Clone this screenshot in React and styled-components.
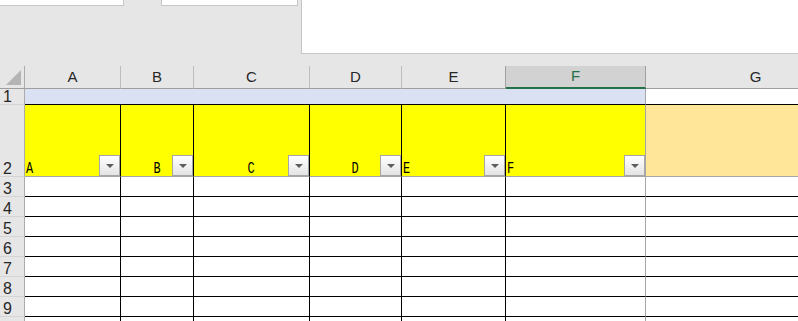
import React from "react";
import styled, { createGlobalStyle } from "styled-components";

const GlobalStyle = createGlobalStyle`
  html, body {
    margin: 0;
    padding: 0;
    background: #ffffff;
    overflow: hidden;
  }
`;

const Page = styled.div`
  width: 798px;
  height: 321px;
  overflow: hidden;
  background: #e6e6e6;
  font-family: "Liberation Sans", Arial, sans-serif;
`;

const TopBar = styled.div`
  display: flex;
  align-items: flex-start;
  height: 66px;
`;

const Field = styled.div`
  box-sizing: border-box;
  width: ${(p) => p.$w || "auto"};
  flex: ${(p) => (p.$grow ? 1 : "none")};
  height: ${(p) => p.$h}px;
  margin-left: ${(p) => p.$ml || 0}px;
  background: #ffffff;
  border: 1px solid #c6c6c6;
  border-top: none;
  border-left: ${(p) => (p.$noLeft ? "none" : "1px solid #c6c6c6")};
  border-right: ${(p) => (p.$grow ? "none" : "1px solid #c6c6c6")};
`;

const Sheet = styled.div`
  display: grid;
  grid-template-columns: 25px 96px 73px 116px 92px 104px 140px 220px;
  grid-template-rows: 23px 16px 72px repeat(8, 20px);
  background: #ffffff;
`;

const Corner = styled.div`
  box-sizing: border-box;
  position: relative;
  background: #e6e6e6;
  border-right: 1px solid #ababab;
  border-bottom: 1px solid #9e9e9e;

  &::after {
    content: "";
    position: absolute;
    left: 6px;
    top: 4px;
    width: 0;
    height: 0;
    border-left: 15px solid transparent;
    border-bottom: 15px solid #b4b4b4;
  }
`;

const ColHead = styled.div`
  box-sizing: border-box;
  display: flex;
  align-items: flex-end;
  justify-content: center;
  padding-bottom: 3px;
  font-size: 15px;
  color: ${(p) => (p.$selected ? "#217346" : "#262626")};
  background: ${(p) => (p.$selected ? "#d2d2d2" : "#e6e6e6")};
  border-right: 1px solid ${(p) => (p.$edge ? "#a0a0a0" : "#bdbdbd")};
  border-bottom: ${(p) =>
    p.$selected ? "2px solid #217346" : "1px solid #9e9e9e"};
`;

const RowHead = styled.div`
  box-sizing: border-box;
  display: flex;
  align-items: flex-end;
  padding: 0 0 0 3px;
  font-size: 16px;
  line-height: 15px;
  color: #262626;
  background: #e6e6e6;
  border-right: 1px solid #ababab;
  border-bottom: 1px solid #d4d4d4;
`;

const Cell = styled.div`
  box-sizing: border-box;
  position: relative;
  display: flex;
  align-items: flex-end;
  justify-content: ${(p) => (p.$center ? "center" : "flex-start")};
  background: ${(p) => p.$fill || "#ffffff"};
  border-right: ${(p) => (p.$right ? `1px solid ${p.$right}` : "none")};
  border-bottom: ${(p) => (p.$bottom ? `1px solid ${p.$bottom}` : "none")};
`;

const Label = styled.span`
  display: inline-block;
  font-family: "Liberation Mono", "DejaVu Sans Mono", monospace;
  font-size: 17px;
  line-height: 15px;
  color: #000000;
  transform: scaleX(0.7);
  transform-origin: ${(p) => (p.$center ? "center" : "left")} bottom;
  margin-left: ${(p) => (p.$center ? 0 : 1)}px;
`;

const FilterButton = styled.div`
  box-sizing: border-box;
  position: absolute;
  right: 0;
  bottom: 0;
  width: 21px;
  height: 21px;
  border: 1px solid #a6a6a6;
  background: linear-gradient(#ffffff, #e4e4e4);
  display: flex;
  align-items: center;
  justify-content: center;

  &::after {
    content: "";
    width: 0;
    height: 0;
    border-left: 4px solid transparent;
    border-right: 4px solid transparent;
    border-top: 4px solid #5c5c5c;
  }
`;

const columns = ["A", "B", "C", "D", "E", "F", "G"];
const BLACK = "#000000";
const GRAY = "#a6a6a6";

const headerCells = [
  { text: "A", center: false },
  { text: "B", center: true },
  { text: "C", center: true },
  { text: "D", center: true },
  { text: "E", center: false },
  { text: "F", center: false },
];

const rightFor = (i) => (i < 5 ? BLACK : i === 5 ? GRAY : null);

// row 10 only peeks in at the bottom edge, its number is below the fold
const bodyRows = [3, 4, 5, 6, 7, 8, 9, null];

const App = () => {
  return (
    <>
      <GlobalStyle />
      <Page>
        <TopBar>
          <Field $w="124px" $h={6} $noLeft />
          <Field $w="137px" $h={6} $ml={37} />
          <Field $grow $h={54} $ml={3} />
        </TopBar>
        <Sheet>
          <Corner />
          {columns.map((c, i) => (
            <ColHead key={c} $selected={c === "F"} $edge={i >= 4 && i <= 5}>
              {c}
            </ColHead>
          ))}

          <RowHead>1</RowHead>
          {columns.map((c, i) => (
            <Cell
              key={c}
              $fill={i < 6 ? "#dae1f3" : "#ffffff"}
              $right={i === 5 ? GRAY : null}
              $bottom={BLACK}
            />
          ))}

          <RowHead>2</RowHead>
          {headerCells.map((h, i) => (
            <Cell
              key={h.text}
              $fill="#ffff00"
              $center={h.center}
              $right={rightFor(i)}
              $bottom={GRAY}
            >
              <Label $center={h.center}>{h.text}</Label>
              <FilterButton />
            </Cell>
          ))}
          <Cell $fill="#ffe699" $bottom={GRAY} />

          {bodyRows.map((r, k) => (
            <React.Fragment key={k}>
              <RowHead>{r}</RowHead>
              {columns.map((c, i) => (
                <Cell key={c} $right={rightFor(i)} $bottom={BLACK} />
              ))}
            </React.Fragment>
          ))}
        </Sheet>
      </Page>
    </>
  );
};

export default App;
